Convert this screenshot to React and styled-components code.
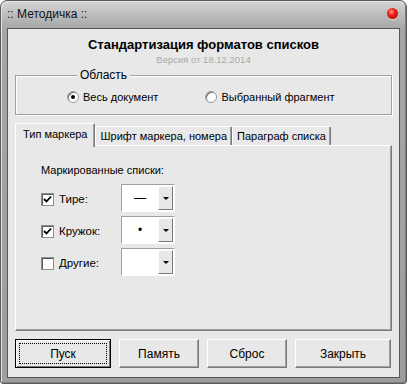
import React from "react";
import styled, { createGlobalStyle } from "styled-components";

const GlobalStyle = createGlobalStyle`
  html, body { margin: 0; padding: 0; background: #fff; }
  body { font-family: "Liberation Sans", Arial, sans-serif; font-size: 11px; color: #000; }
  * { box-sizing: border-box; }
`;

const Frame = styled.div`
  width: 407px;
  height: 384px;
  display: flex;
  flex-direction: column;
  border: 1px solid #5c5c5c;
  border-radius: 7px 7px 3px 3px;
  background: linear-gradient(#d6d6d6 0px, #bcbcbc 14px, #a6a6a6 28px, #9d9d9d 100%);
  box-shadow: inset 1px 1px 0 #e2e2e2, inset -1px -1px 0 #7d7d7d;
`;

const TitleBar = styled.div`
  height: 27px;
  display: flex;
  align-items: center;
  justify-content: space-between;
  padding: 0 8px 1px 6px;
`;

const Title = styled.span`
  font-size: 12px;
  color: #111;
`;

const CloseDot = styled.span`
  width: 11px;
  height: 11px;
  border-radius: 50%;
  margin-top: -2px;
  background: radial-gradient(circle at 40% 35%, #ff9a8a 0, #f0241a 35%, #b80e08 75%, #7a0a06 100%);
  box-shadow: 0 1px 0 rgba(255, 255, 255, 0.5);
`;

const Client = styled.div`
  flex: 1;
  margin: 0 6px 5px 6px;
  border: 1px solid #575757;
  background: #e8e8e8;
  padding: 0 7px 7px 7px;
  display: flex;
  flex-direction: column;
`;

const Header = styled.div`
  padding-top: 8px;
  text-align: center;
`;

const Heading = styled.div`
  font-weight: bold;
  font-size: 13px;
  line-height: 16px;
  color: #000;
`;

const Version = styled.div`
  font-size: 9.5px;
  line-height: 14px;
  color: #a9a9a9;
`;

const Group = styled.fieldset`
  margin: 1px 0 0 0;
  padding: 8px 0 10px 51px;
  border: 1px solid #a0a0a0;
  box-shadow: 1px 1px 0 #fff, inset 1px 1px 0 #fff;
  min-width: 0;
  display: flex;
  gap: 47px;
`;

const Legend = styled.legend`
  margin-left: 10px;
  padding: 0 3px;
  line-height: 14px;
  font-size: 12px;
  background: #e8e8e8;
`;

const Option = styled.label`
  display: flex;
  align-items: center;
  gap: 4px;
  line-height: 14px;
  font-size: 11px;
`;

const RadioMark = styled.span`
  width: 12px;
  height: 12px;
  border-radius: 50%;
  background: #fff;
  border: 1px solid #9a9a9a;
  box-shadow: inset 1px 1px 0 #6e6e6e;
  display: flex;
  align-items: center;
  justify-content: center;
  &::after {
    content: "";
    width: 4px;
    height: 4px;
    border-radius: 50%;
    background: ${(p) => (p.checked ? "#000" : "transparent")};
  }
`;

const TabStrip = styled.div`
  margin-top: 8px;
  height: 22px;
  display: flex;
  align-items: flex-end;
  position: relative;
  z-index: 1;
`;

const Tab = styled.div`
  height: ${(p) => (p.active ? "24px" : "19px")};
  margin-bottom: ${(p) => (p.active ? "-2px" : "0")};
  padding: ${(p) => (p.active ? "0 7px 3px 7px" : "0 4px")};
  display: flex;
  align-items: center;
  font-size: 11px;
  background: #e8e8e8;
  border-top: 1px solid #fff;
  border-left: 1px solid #fff;
  border-right: 1px solid #7a7a7a;
  border-radius: 2px 2px 0 0;
  box-shadow: inset -1px 0 0 #a0a0a0;
  white-space: nowrap;
`;

const Panel = styled.div`
  height: 186px;
  border: 1px solid;
  border-color: #fff #7a7a7a #7a7a7a #fff;
  box-shadow: inset -1px -1px 0 #a0a0a0;
  padding: 17px 0 0 25px;
`;

const Caption = styled.div`
  line-height: 14px;
  margin-bottom: 7px;
  font-size: 11px;
`;

const Rows = styled.div`
  display: flex;
  flex-direction: column;
  gap: 4px;
`;

const Row = styled.div`
  display: flex;
  align-items: center;
  height: 28px;
`;

const CheckLabel = styled.label`
  width: 80px;
  display: flex;
  align-items: center;
  gap: 5px;
  margin-top: 2px;
  font-size: 11.5px;
`;

const CheckBox = styled.span`
  width: 13px;
  height: 13px;
  background: #fff;
  border: 1px solid #8c8c8c;
  box-shadow: inset 1px 1px 0 #5c5c5c;
  display: flex;
  align-items: center;
  justify-content: center;
`;

const Combo = styled.div`
  width: 54px;
  height: 28px;
  display: flex;
  border: 1px solid;
  border-color: #a0a0a0 #fff #fff #a0a0a0;
  background: #fff;
`;

const ComboValue = styled.div`
  flex: 1;
  display: flex;
  align-items: center;
  justify-content: center;
  font-size: 12px;
`;

const ComboButton = styled.div`
  width: 15px;
  margin: 1px 1px 1px 0;
  background: #e8e8e8;
  border: 1px solid;
  border-color: #fff #7a7a7a #7a7a7a #fff;
  display: flex;
  align-items: center;
  justify-content: center;
  &::after {
    content: "";
    border-left: 3px solid transparent;
    border-right: 3px solid transparent;
    border-top: 3px solid #000;
  }
`;

const ButtonBar = styled.div`
  margin-top: 8px;
  display: flex;
  gap: 8px;
`;

const Button = styled.button`
  width: ${(p) => p.w}px;
  height: 29px;
  font-family: inherit;
  font-size: 12px;
  color: #000;
  background: #e8e8e8;
  border: 1px solid;
  border-color: #fff #7a7a7a #7a7a7a #fff;
  box-shadow: inset -1px -1px 0 #a0a0a0;
  padding: 0;
  ${(p) =>
    p.primary &&
    `
    border: 1px solid #000;
    box-shadow: inset 1px 1px 0 #fff, inset -1px -1px 0 #7a7a7a;
    outline: 1px dotted #000;
    outline-offset: -5px;
  `}
`;

const Check = () => (
  <svg width="9" height="9" viewBox="0 0 9 9">
    <path d="M1 4 L3.5 6.5 L8 1.5" stroke="#000" strokeWidth="1.8" fill="none" />
  </svg>
);

const rows = [
  { label: "Тире:", checked: true, value: "—" },
  { label: "Кружок:", checked: true, value: "•" },
  { label: "Другие:", checked: false, value: "" },
];

export default function App() {
  return (
    <>
      <GlobalStyle />
      <Frame>
        <TitleBar>
          <Title>:: Методичка ::</Title>
          <CloseDot />
        </TitleBar>
        <Client>
          <Header>
            <Heading>Стандартизация форматов списков</Heading>
            <Version>Версия от 18.12.2014</Version>
          </Header>
          <Group>
            <Legend>Область</Legend>
            <Option>
              <RadioMark checked />
              Весь документ
            </Option>
            <Option>
              <RadioMark />
              Выбранный фрагмент
            </Option>
          </Group>
          <TabStrip>
            <Tab active>Тип маркера</Tab>
            <Tab>Шрифт маркера, номера</Tab>
            <Tab>Параграф списка</Tab>
          </TabStrip>
          <Panel>
            <Caption>Маркированные списки:</Caption>
            <Rows>
              {rows.map((r) => (
                <Row key={r.label}>
                  <CheckLabel>
                    <CheckBox>{r.checked && <Check />}</CheckBox>
                    {r.label}
                  </CheckLabel>
                  <Combo>
                    <ComboValue>{r.value}</ComboValue>
                    <ComboButton />
                  </Combo>
                </Row>
              ))}
            </Rows>
          </Panel>
          <ButtonBar>
            <Button w={96} primary>Пуск</Button>
            <Button w={80}>Память</Button>
            <Button w={80}>Сброс</Button>
            <Button w={96}>Закрыть</Button>
          </ButtonBar>
        </Client>
      </Frame>
    </>
  );
}
